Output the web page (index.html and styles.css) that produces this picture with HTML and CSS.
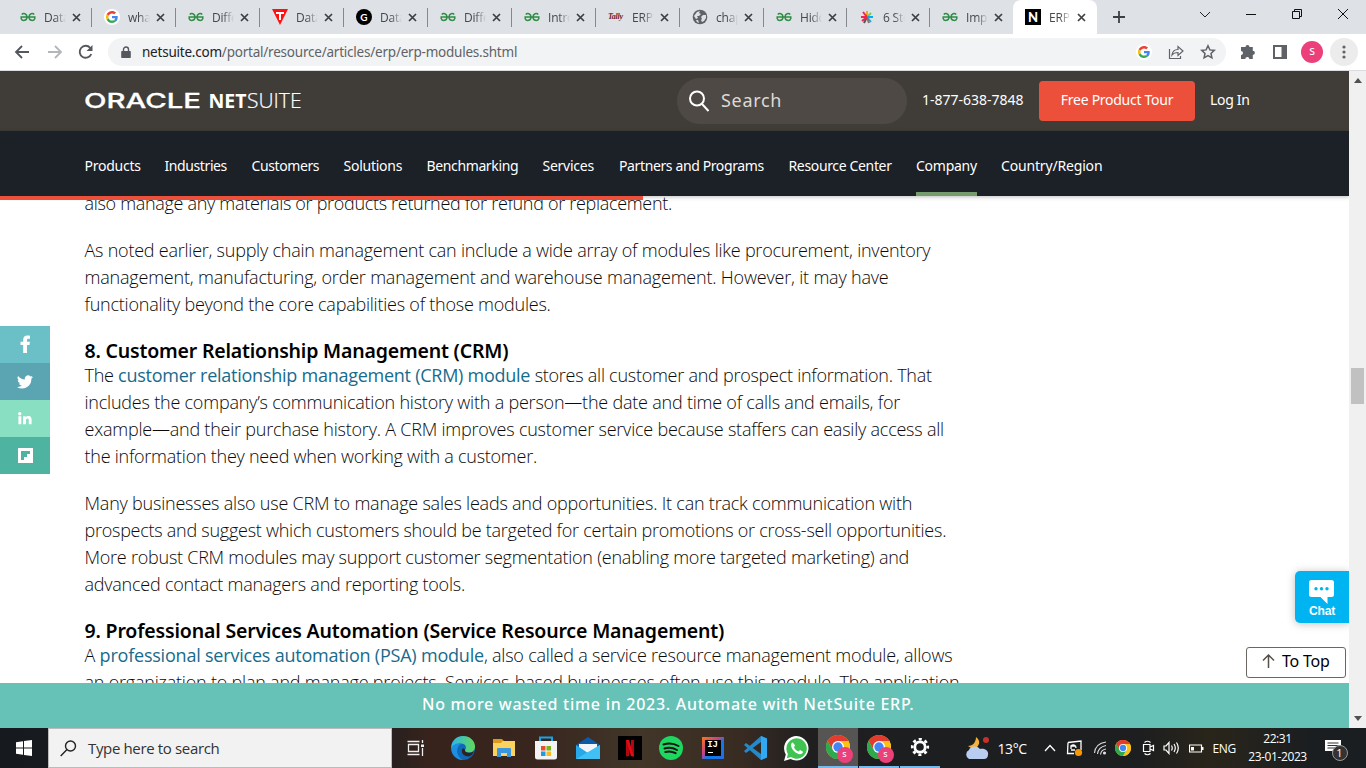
FILE: index.html
```html
<!DOCTYPE html>
<html lang="en">
<head>
<meta charset="utf-8">
<title>ERP Modules</title>
<link rel="stylesheet" href="styles.css">
</head>
<body>
<svg class="defs" width="0" height="0">
  <symbol id="gfg" viewBox="0 0 16 16"><path d="M1.800 5.500C3.200 3.800 7 4.500 7 8c0 4-4.800 4.500-5.800 1.400V8h13.600v1.400C13.800 12.500 9 12 9 8c0-3.500 3.800-4.200 5.200-2.500" fill="none" stroke="#2f8d46" stroke-width="1.500"/></symbol>
  <symbol id="goog" viewBox="0 0 48 48"><path fill="#ea4335" d="M24 9.500c3.540 0 6.710 1.220 9.210 3.600l6.850-6.850C35.900 2.380 30.470 0 24 0 14.620 0 6.510 5.380 2.560 13.220l7.980 6.190C12.430 13.720 17.740 9.500 24 9.500z"/><path fill="#4285f4" d="M46.980 24.550c0-1.570-.15-3.090-.38-4.550H24v9.020h12.940c-.58 2.960-2.260 5.480-4.780 7.180l7.730 6c4.510-4.180 7.090-10.360 7.090-17.650z"/><path fill="#fbbc05" d="M10.530 28.590a14.500 14.500 0 0 1 0-9.180l-7.980-6.190a24 24 0 0 0 0 21.560z"/><path fill="#34a853" d="M24 48c6.480 0 11.930-2.130 15.890-5.810l-7.730-6c-2.150 1.450-4.920 2.300-8.160 2.300-6.260 0-11.570-4.220-13.470-9.910l-7.980 6.190C6.510 42.620 14.620 48 24 48z"/></symbol>
  <symbol id="x" viewBox="0 0 9 9"><path d="M1 1l7 7M8 1L1 8" stroke="#3c4043" stroke-width="1.700"/></symbol>
  <symbol id="chrome" viewBox="0 0 24 24"><circle cx="12" cy="12" r="12" fill="#fbc116"/><path d="M1.600 6A12 12 0 0 1 22.400 6H12L6.800 15z" fill="#e33b2e"/><path d="M1.600 6A12 12 0 0 0 12 24l5.200-9L12 12l-5.200 3z" fill="#2da94f"/><path d="M12 24A12 12 0 0 0 22.400 6H12l5.200 9z" fill="#fbc116"/><circle cx="12" cy="12" r="6" fill="#fff"/><circle cx="12" cy="12" r="4.700" fill="#4285f4"/></symbol>
</svg>

<div class="tabs">
  <div class="tab"><svg class="fav"><use href="#gfg"/></svg><span>Data</span><svg class="cl"><use href="#x"/></svg></div>
  <div class="tab"><i class="fav disc"><svg width="12" height="12"><use href="#goog"/></svg></i><span>what</span><svg class="cl"><use href="#x"/></svg></div>
  <div class="tab"><svg class="fav"><use href="#gfg"/></svg><span>Diffe</span><svg class="cl"><use href="#x"/></svg></div>
  <div class="tab"><svg class="fav" viewBox="0 0 16 16"><path d="M0 0h16L8 16z" fill="#f11"/><path d="M4 3h8v2H9v6H7V5H4z" fill="#fff"/></svg><span>Data</span><svg class="cl"><use href="#x"/></svg></div>
  <div class="tab"><i class="fav gdark">G</i><span>Data</span><svg class="cl"><use href="#x"/></svg></div>
  <div class="tab"><svg class="fav"><use href="#gfg"/></svg><span>Diffe</span><svg class="cl"><use href="#x"/></svg></div>
  <div class="tab"><svg class="fav"><use href="#gfg"/></svg><span>Intro</span><svg class="cl"><use href="#x"/></svg></div>
  <div class="tab"><i class="fav tally">Tally</i><span>ERP</span><svg class="cl"><use href="#x"/></svg></div>
  <div class="tab"><svg class="fav" viewBox="0 0 16 16"><circle cx="8" cy="8" r="7.300" fill="#5f6368"/><path d="M2 7l3-4 3-1-1 2 2 1-2 2H5l1 2-2 1zM9 8l2-2 3 0 0 3-2 3-2 1-1-2 1-1zM4 11l2 0 1 3-2-1z" fill="#dee1e6"/></svg><span>chap</span><svg class="cl"><use href="#x"/></svg></div>
  <div class="tab narrow"><svg class="fav"><use href="#gfg"/></svg><span>Hidd</span><svg class="cl"><use href="#x"/></svg></div>
  <div class="tab narrow"><svg class="fav" viewBox="0 0 16 16" fill="none" stroke-width="2"><path d="M8 8V2" stroke="#f5a623"/><path d="M8 8l4-4M9 8" stroke="#8cc63f"/><path d="M9 8h5" stroke="#00aeef"/><path d="M8 8l4 5" stroke="#29a9e0"/><path d="M8 8l-3 6" stroke="#555"/><path d="M8 8l2 6" stroke="#777"/><path d="M8 8H2M8 8L3 12M8 8L4 3" stroke="#f0264a"/></svg><span>6 Ste</span><svg class="cl"><use href="#x"/></svg></div>
  <div class="tab narrow nosep"><svg class="fav"><use href="#gfg"/></svg><span>Imp</span><svg class="cl"><use href="#x"/></svg></div>
  <div class="tab active"><i class="fav nfav">N</i><span>ERP</span><svg class="cl"><use href="#x"/></svg></div>
  <svg class="plus" width="12" height="12"><path d="M6 0v12M0 6h12" stroke="#3c4043" stroke-width="1.800"/></svg>
  <div class="wins">
    <svg width="12" height="12"><path d="M1 4l5 5 5-5" fill="none" stroke="#222"/></svg>
    <svg width="12" height="12"><path d="M1 6.500h10" stroke="#111"/></svg>
    <svg width="12" height="12"><path d="M1.500 3.500h7v7h-7zM3.500 3.500v-2h7v7h-2" fill="none" stroke="#111"/></svg>
    <svg width="12" height="12"><path d="M1 1l10 10M11 1L1 11" stroke="#111"/></svg>
  </div>
</div>

<div class="toolbar">
  <svg class="back" width="16" height="16" fill="none" stroke="#54585d" stroke-width="1.800"><path d="M15 8H2M8 2L2 8l6 6"/></svg>
  <svg class="fwd" width="16" height="16" fill="none" stroke="#b4b7ba" stroke-width="1.800"><path d="M1 8h13M8 2l6 6-6 6"/></svg>
  <svg class="reload" width="16" height="16"><path d="M13.300 10A6 6 0 1 1 12.200 3.800" fill="none" stroke="#54585d" stroke-width="1.900"/><path d="M14.500 1v6h-6z" fill="#54585d"/></svg>
  <div class="omni">
    <svg width="10" height="13"><path d="M1 5h8q.8 0 .8.800v5.400q0 .8-.8.800H1q-.8 0-.8-.8V5.800Q.2 5 1 5z" fill="#54585d"/><path d="M2.500 5V3.500a2.500 2.500 0 0 1 5 0V5" fill="none" stroke="#54585d" stroke-width="1.400"/></svg>
    <p class="url"><b>netsuite.com</b>/portal/resource/articles/erp/erp-modules.shtml</p>
    <i class="disc gd"><svg width="12" height="12"><use href="#goog"/></svg></i>
    <svg class="share" width="16" height="16" fill="none" stroke="#5f6368" stroke-width="1.200"><path d="M1.500 5v9.500h11V12M4 11c.5-4 3-5.500 6-5.500V2.500L15 7l-5 4.500v-3C7 8.500 5.500 9 4 11z"/></svg>
    <svg class="star" width="16" height="16" fill="none" stroke="#5f6368" stroke-width="1.500"><path d="M8 1.800l1.900 4.100 4.400.5-3.300 3 .9 4.400L8 11.600l-3.900 2.200.9-4.400-3.300-3 4.400-.5z"/></svg>
  </div>
  <svg class="puz" width="16" height="16" fill="#5f6368"><path d="M5.500 3a2 2 0 0 1 4 0h3.300v3.700a2.100 2.100 0 0 1 0 4.200V15H9.300a2 2 0 0 0-4 0H1v-4a2 2 0 0 0 0-4V3z"/></svg>
  <svg class="side" width="14" height="14"><path d="M1 1h12v12H1z" fill="none" stroke="#5f6368" stroke-width="2"/><path d="M8.500 0H14v14H8.500z" fill="#5f6368"/></svg>
  <i class="avatar">s</i>
  <div class="more"><svg width="4" height="14" fill="#5f6368"><circle cx="2" cy="2" r="1.600"/><circle cx="2" cy="7" r="1.600"/><circle cx="2" cy="12" r="1.600"/></svg></div>
</div>

<div class="view">
  <div class="page">
    <header class="top">
      <svg class="logo" width="217" height="20" fill="#fff"><text x="-1" y="17" class="l1" textLength="117" lengthAdjust="spacingAndGlyphs">ORACLE</text><text x="123.500" y="17" class="l2" textLength="38" lengthAdjust="spacingAndGlyphs">NET</text><text x="162" y="17" class="l3" textLength="54.500" lengthAdjust="spacingAndGlyphs">SUITE</text></svg>
      <div class="search"><svg width="20" height="22" fill="none" stroke="#fff" stroke-width="2"><circle cx="8" cy="8.500" r="7"/><path d="M13 14l6.500 7"/></svg><span>Search</span></div>
      <span class="phone">1-877-638-7848</span>
      <a class="tour">Free Product Tour</a>
      <span class="login">Log In</span>
    </header>
    <nav class="nav"><a class="n1">Products</a><a class="n2">Industries</a><a class="n3">Customers</a><a class="n4">Solutions</a><a class="n5">Benchmarking</a><a class="n6">Services</a><a class="n7">Partners and Programs</a><a class="n8">Resource Center</a><a class="n9 on">Company</a><a class="n10">Country/Region</a></nav>
    <div class="progress"></div>
    <article class="art">
      <p><span class="a0">also manage any materials or products returned for refund or replacement.</span></p>
      <p><span class="a1">As noted earlier, supply chain management can include a wide array of modules like procurement, inventory</span><span class="a2">management, manufacturing, order management and warehouse management. However, it may have</span><span class="a3">functionality beyond the core capabilities of those modules.</span></p>
      <h3 class="h8">8. Customer Relationship Management (CRM)</h3>
      <p><span class="a4">The <a>customer relationship management (CRM) module</a> stores all customer and prospect information. That</span><span class="a5">includes the company’s communication history with a person—the date and time of calls and emails, for</span><span class="a6">example—and their purchase history. A CRM improves customer service because staffers can easily access all</span><span class="a7">the information they need when working with a customer.</span></p>
      <p><span class="a8">Many businesses also use CRM to manage sales leads and opportunities. It can track communication with</span><span class="a9">prospects and suggest which customers should be targeted for certain promotions or cross-sell opportunities.</span><span class="a10">More robust CRM modules may support customer segmentation (enabling more targeted marketing) and</span><span class="a11">advanced contact managers and reporting tools.</span></p>
      <h3 class="h9">9. Professional Services Automation (Service Resource Management)</h3>
      <p><span class="a12">A <a>professional services automation (PSA) module</a>, also called a service resource management module, allows</span><span class="a13">an organization to plan and manage projects. Services-based businesses often use this module. The application</span></p>
    </article>
    <div class="social">
      <i class="fb"><svg width="12" height="19"><path d="M4.200 18V10H1.500V6.800h2.700V4.700C4.200 2 5.800.6 8.200.6c1.200 0 2.800.2 2.800.2v3H9.600c-1.300 0-1.600.7-1.600 1.500v1.500h2.900L10.500 10H8v8z" fill="#fff"/></svg></i>
      <i class="tw"><svg width="16" height="14" viewBox="0 0 24 20"><path d="M24 2.400a10 10 0 0 1-2.800.8A5 5 0 0 0 23.300.500a10 10 0 0 1-3.100 1.200 4.900 4.900 0 0 0-8.400 4.500A14 14 0 0 1 1.700 1a4.900 4.900 0 0 0 1.500 6.600A5 5 0 0 1 1 7v.1a4.900 4.900 0 0 0 3.900 4.800 5 5 0 0 1-2.200.1 4.900 4.900 0 0 0 4.600 3.400A9.900 9.900 0 0 1 0 17.500 14 14 0 0 0 21.500 5a10 10 0 0 0 2.500-2.600z" fill="#fff"/></svg></i>
      <i class="li"><svg width="14" height="14" fill="#fff"><circle cx="1.800" cy="1.800" r="1.700"/><path d="M.4 4.300h2.900v8H.4zM5 4.300h2.700v1.200C8.200 4.600 9.200 4.100 10.300 4.100c2.800 0 3.300 1.800 3.300 4.100v4.100h-2.800V8.600c0-.9 0-2-1.300-2s-1.600 1-1.600 2v3.700H5z"/></svg></i>
      <i class="fl"><svg width="15" height="15"><path d="M0 0h15v15H0z" fill="#fff"/><path d="M3 3h9v3H9v3H6v3H3z" fill="#4fb3a2"/></svg></i>
    </div>
    <div class="chat"><svg width="26" height="24"><path d="M2.500 0h20Q25 0 25 2.500v12q0 2.500-2.500 2.500H18.500v7L11.500 17h-9Q0 17 0 14.500v-12Q0 0 2.500 0z" fill="#fff"/><g fill="#00b4f1"><circle cx="7" cy="8.700" r="1.700"/><circle cx="12.500" cy="8.700" r="1.700"/><circle cx="18" cy="8.700" r="1.700"/></g></svg><span>Chat</span></div>
    <div class="totop"><svg width="13" height="15" fill="none" stroke="#555049" stroke-width="1.500"><path d="M6.500 14V1M1 6.500L6.500 1 12 6.500"/></svg><span>To Top</span></div>
    <div class="banner"><span>No more wasted time in 2023. Automate with NetSuite ERP.</span></div>
  </div>
  <div class="scroll"><svg width="8" height="5"><path d="M4 0l4 5H0z" fill="#505050"/></svg><i></i><svg class="dn" width="8" height="5"><path d="M4 5L8 0H0z" fill="#505050"/></svg></div>
</div>

<div class="task">
  <div class="start"><svg width="16" height="16" fill="#fff"><path d="M0 2.200l7-.9v6.200H0zM8 1.100L16 0v7.500H8zM0 8.500h7v6.200l-7-.9zM8 8.500h8V16l-8-1.100z"/></svg></div>
  <div class="tsearch"><svg width="17" height="17" fill="none" stroke="#222" stroke-width="1.400"><circle cx="10.500" cy="6" r="5"/><path d="M7 9.500L.700 16"/></svg><span>Type here to search</span></div>
  <div class="apps">
    <i class="view-btn"><svg width="18" height="16" fill="none" stroke="#eee" stroke-width="1.300"><path d="M1.500 4.500h10v7h-10zM.500 1.500h12M.500 14.500h12M15.500 0v3M15.500 8v8"/><path d="M14 4.500h3v2.500h-3z" fill="#eee" stroke="none"/></svg></i>
    <i><svg width="24" height="24"><defs><linearGradient id="ed" x1="0" x2="1"><stop offset="0" stop-color="#2fb5e8"/><stop offset="1" stop-color="#63d957"/></linearGradient></defs><circle cx="12" cy="12" r="12" fill="#1268b8"/><path d="M.3 10C1.500 4 6 0 12 0c7 0 12 5 12 10.500 0 4-3 6-6 6-2.500 0-4.500-1-4-2.500 2-2 1-6.500-4-6.500C6 7.500 2 9 .3 13z" fill="url(#ed)"/><path d="M10 8c-5 2-6 12 2 15.900C5 24 0 18 .3 12 2 8 7 6.500 10 8z" fill="#1b8fe0"/><path d="M14 14c-.5 2 2 3 4.500 2.700 2 0 3.500-.7 4.500-1.700-1 3-3 5-5 5.500-5 0-8-3-7-7 .6-1.600 2.500-1.500 3 .5z" fill="#2b2320"/></svg></i>
    <i><svg width="22" height="20"><path d="M0 1h9l2 2H0z" fill="#d08b12"/><path d="M0 3h22v15H0z" fill="#fbd25d"/><path d="M0 1.500Q0 1 1 1h7l1.500 2L8 5H0z" fill="#dc9a1c"/><path d="M4 19v-8q0-1 1-1h12q1 0 1 1v8h-4v-4H8v4z" fill="#3a96dd"/></svg></i>
    <i><svg width="24" height="24"><path d="M6 6V1.500h12V6" fill="none" stroke="#19a4e8" stroke-width="2"/><path d="M1 5h22v16q0 2.500-2.500 2.500h-17Q1 23.500 1 21z" fill="#f3f3f3"/><path d="M7 10h4.500v4.500H7z" fill="#e8502b"/><path d="M12.500 10H17v4.500h-4.500z" fill="#79b41c"/><path d="M7 15.500h4.500V20H7z" fill="#1b9de2"/><path d="M12.500 15.500H17V20h-4.500z" fill="#f9b81b"/></svg></i>
    <i><svg width="24" height="23"><path d="M0 8l12-8 12 8v3H0z" fill="#0d5ba8"/><path d="M3 7h18v9H3z" fill="#f2f6f9"/><path d="M0 8l12 8 12-8v14H0z" fill="#27a8e8"/><path d="M0 22L24 8v14z" fill="#41c0f5"/></svg></i>
    <i><svg width="24" height="24"><path d="M0 0h24v24H0z" fill="#000"/><path d="M8 4h3v16l-3 .4zM13 4h3v16.400l-3-.4z" fill="#b20710"/><path d="M8 4h3l5 16.400-3-.4z" fill="#e50914"/></svg></i>
    <i><svg width="24" height="24"><circle cx="12" cy="12" r="12" fill="#1ed760"/><path d="M4.500 8.500C9 7 15 7.500 19.500 10M5.500 12.500c4-1.300 8.500-.8 12.500 1.500M6.300 16c3.500-1 7-.6 10.300 1.200" stroke="#141414" stroke-width="2" fill="none" stroke-linecap="round"/></svg></i>
    <i class="ij"><b>IJ</b></i>
    <i><svg width="24" height="24"><path d="M18 0l6 2.500v19L18 24 1 9l2-2 15 11V6L3 17l-2-2z" fill="#2489ca"/><path d="M18 0l6 2.500v19L18 24z" fill="#31a8f2"/></svg></i>
    <i><svg width="25" height="25"><path d="M0 25l1.800-6.500A12.200 12.200 0 1 1 6.500 23z" fill="#fff"/><path d="M2.800 22.200l1.100-4.300A10.200 10.200 0 1 1 7 21.100z" fill="#3fc351"/><path d="M8.800 6.500c-1 .2-2 1.500-1.800 3 .5 4 5 8.500 9 8.800 1.500 0 3-1 3-2.500l-3-1.900-1.500 1.600c-2-.5-4-2.500-4.500-4.400l1.200-1.500z" fill="#fff"/></svg></i>
    <i class="run cur"><svg width="24" height="24"><use href="#chrome"/></svg><em>s</em></i>
    <i class="run"><svg width="24" height="24"><use href="#chrome"/></svg><em>s</em></i>
    <i class="run set"><svg width="20" height="20"><circle cx="10" cy="10" r="7.800" fill="none" stroke="#fff" stroke-width="2.600" stroke-dasharray="3.060 3.060" stroke-dashoffset="1.500"/><circle cx="10" cy="10" r="5.200" fill="none" stroke="#fff" stroke-width="2.800"/></svg></i>
  </div>
  <div class="tray">
    <svg class="wx" width="26" height="24"><path d="M12 1c5 4 4 8-2 13l-6-4c5 0 8-4 8-9z" fill="#f6b13c"/><circle cx="22" cy="4" r="3" fill="#c9302c"/><path d="M5 23a5 5 0 0 1 0-9c1-4 8-5 11-1 5-1 9 2 8 6-.3 3-2 4-4 4z" fill="#b8cdf0"/></svg>
    <span class="deg">13°C</span>
    <svg class="up" width="12" height="8"><path d="M1 7l5-5.500L11 7" fill="none" stroke="#fff" stroke-width="1.300"/></svg>
    <svg class="t1" width="17" height="17"><path d="M2 2.500l13-1.500v9M2 2.500l-.5 11H8M5 9V6h4M5 6c2-2 5-1 5 2M5 10h4" fill="none" stroke="#fff" stroke-width="1.300"/><circle cx="12.500" cy="12.500" r="3.600" fill="#f7980a"/></svg>
    <svg class="t2" width="14" height="14" fill="none" stroke="#ddd" stroke-width="1.100"><path d="M1.500 12C2 6 6 2 13 1M4.500 13C5 8.500 8 5.500 13 4.500M7.500 13.500C8 10.500 9.500 8.500 13 8"/><circle cx="11.500" cy="12" r="1" fill="#fff"/></svg>
    <svg class="t3" width="16" height="16"><use href="#chrome"/></svg>
    <svg class="t4" width="13" height="16" fill="none" stroke="#fff" stroke-width="1.200"><path d="M2.500 2.500q3-2.500 6 0M2.500 13.500q3 2.500 6 0M1.500 4.500h6.500v7H1.500zM8 7l3.500-1.500v5L8 9"/></svg>
    <svg class="t5" width="17" height="14" fill="none" stroke="#fff" stroke-width="1.200"><path d="M1 5v4h2l3 3.500v-11L3 5zM8.500 4.500q1.500 2.500 0 5M11 3q2.600 4 0 8M13.500 1.500q3.600 5.500 0 11"/></svg>
    <svg class="t6" width="15" height="9"><path d="M.500 1h12v7H.500z" fill="none" stroke="#fff" stroke-width="1.200"/><path d="M2 3h3v3.500H2zM13 3h1.500v3H13z" fill="#fff"/></svg>
    <span class="eng">ENG</span>
    <div class="clock"><span class="tm">22:31</span><span class="dt">23-01-2023</span></div>
    <div class="note"><svg width="17" height="18"><path d="M0 1h16v11h-5v4l-4-4H0z" fill="#fff"/><path d="M2.500 4h11M2.500 6.500h11M2.500 9h8" stroke="#333"/></svg><em>1</em></div>
  </div>
</div>
</body>
</html>
```

FILE: styles.css
```css
* { box-sizing: border-box; }
body { margin: 0; width: 1366px; height: 768px; overflow: hidden; display: flex; flex-direction: column; font-family: "Noto Sans", "Open Sans", sans-serif; background: #fff; }
p, h3 { margin: 0; }
i, em { font-style: normal; }
svg { display: block; flex: none; }
.defs { position: absolute; }

.tabs { height: 34px; flex: none; background: #dee1e6; display: flex; padding-left: 8px; }
.tab { width: 84px; flex: none; height: 34px; display: flex; align-items: center; padding-left: 12px; font: 12px "Open Sans", sans-serif; color: #45484c; background: linear-gradient(#85888d, #85888d) right 0 top 8px / 1px 19px no-repeat; }
.tab.narrow { width: 83px; }
.tab.nosep { background: none; }
.tab.active { background: #fff; border-radius: 8px 8px 0 0; }
.fav { width: 16px; height: 16px; flex: none; margin-right: 8px; }
.tab span { width: 22px; overflow: hidden; white-space: nowrap; letter-spacing: -.2px; -webkit-mask-image: linear-gradient(90deg, #000 50%, transparent); mask-image: linear-gradient(90deg, #000 50%, transparent); }
.cl { width: 9px; height: 9px; margin-left: 6px; }
.disc { width: 16px; height: 16px; border-radius: 50%; background: #fff; display: flex; align-items: center; justify-content: center; }
.gdark { border-radius: 50%; background: #000; color: #fff; font: bold 10px/16px Lato, sans-serif; text-align: center; }
.nfav { background: #000; color: #fff; font: 900 13px/16px Lato, sans-serif; text-align: center; }
.tally { font: italic bold 8px/16px "Liberation Serif", serif; color: #6b2530; letter-spacing: -.3px; }
.plus { margin: 11px 0 0 16px; }
.wins { display: flex; gap: 34px; margin: 8px 0 0 74px; }

.toolbar { height: 37px; flex: none; display: flex; align-items: center; border-bottom: 1px solid #dadce0; padding: 0 8px 0 14px; }
.fwd { margin-left: 17px; }
.reload { margin-left: 15px; }
.omni { width: 1118px; height: 28px; border-radius: 14px; background: #f1f3f4; margin-left: 14px; display: flex; align-items: center; padding-left: 13px; }
.url { font-size: 13.500px; color: #5f6368; margin-left: 11px; width: 994px; letter-spacing: -.22px; }
.url b { font-weight: 400; color: #202124; }
.gd { flex: none; }
.share { margin-left: 16px; }
.star { margin-left: 16px; }
.puz { margin-left: 14px; }
.side { margin-left: 17px; }
.avatar { width: 22px; height: 22px; border-radius: 50%; background: #ec407a; color: #fff; font-size: 12px; line-height: 20px; text-align: center; margin-left: 14px; }
.more { width: 28px; height: 28px; border-radius: 50%; background: #ececec; display: flex; align-items: center; justify-content: center; margin-left: 7px; }

.view { height: 657px; flex: none; display: flex; }
.page { width: 1349px; height: 657px; position: relative; overflow: hidden; }
.top { height: 60px; background: #403c38; display: flex; align-items: center; padding-left: 85px; color: #fff; font-size: 14px; position: relative; z-index: 2; }
.logo { margin-right: 375px; }
.l1 { font: 500 20px Inter, sans-serif; stroke: #fff; stroke-width: .3px; }
.l2 { font: 700 20px "Open Sans", sans-serif; }
.l3 { font: 300 20px "Open Sans", sans-serif; stroke: #fff; stroke-width: .2px; }
.search { width: 230px; height: 46px; border-radius: 23px; background: #4e4944; display: flex; align-items: center; padding-left: 12px; font-size: 18px; letter-spacing: .7px; color: #dcdad6; }
.search span { margin: -2px 0 0 12px; }
.phone { width: 102px; margin-left: 15px; white-space: nowrap; padding-bottom: 3px; letter-spacing: 0; }
.tour { width: 156px; height: 40px; border-radius: 4px; background: #ec503a; margin-left: 15px; line-height: 38px; text-align: center; letter-spacing: -.27px; }
.login { margin-left: 15px; letter-spacing: -.3px; padding-bottom: 3px; }
.nav { height: 65px; background: #1c2027; display: flex; padding-left: 84.500px; color: #fff; font-size: 14px; line-height: 69px; white-space: nowrap; position: relative; z-index: 2; box-shadow: 0 1px 4px rgba(0,0,0,.25); letter-spacing: -.25px; }
.n1 { width: 80px; } .n2 { width: 87px; letter-spacing: -.4px; } .n3 { width: 92px; letter-spacing: -.4px; } .n4 { width: 83px; } .n5 { width: 116px; letter-spacing: -.37px; }
.n6 { width: 76.500px; } .n7 { width: 169.500px; letter-spacing: -.38px; } .n8 { width: 127.500px; letter-spacing: -.35px; } .n9 { width: 61px; margin-right: 24px; } .n10 { width: 102px; letter-spacing: -.17px; }
.on { border-bottom: 4px solid #759c6c; height: 65px; }
.progress { height: 4px; width: 643px; background: #ec503a; position: relative; z-index: 2; }
.art { margin: -10px 0 0 84.500px; width: 900px; font: 300 18px/27px "Open Sans", sans-serif; color: #0c0a08; }
.art p { margin-bottom: 20px; }
.art span { display: block; white-space: nowrap; }
.art a { color: #176b8c; font-weight: 400; }
.art h3 { font: 600 19.500px/25px "Noto Sans", sans-serif; color: #000; white-space: nowrap; margin-bottom: -1px; letter-spacing: -.19px; }
.art h3.h9 { letter-spacing: -.165px; }
.a0 { letter-spacing: -.31px; }
.a1 { letter-spacing: -.235px; }
.a2 { letter-spacing: -.195px; }
.a3 { letter-spacing: -.23px; }
.a4 { letter-spacing: -.255px; }
.a5 { letter-spacing: -.215px; }
.a6 { letter-spacing: -.222px; }
.a7 { letter-spacing: -.25px; }
.a8 { letter-spacing: -.215px; }
.a9 { letter-spacing: -.256px; }
.a10 { letter-spacing: -.243px; }
.a11 { letter-spacing: -.235px; }
.a12, .a13 { letter-spacing: -.21px; }

.social { position: absolute; left: 0; top: 255px; width: 50px; }
.social i { height: 37px; display: flex; align-items: center; justify-content: center; }
.fb { background: #6bbfc6; } .tw { background: #5aa5b1; } .li { background: #88dfc1; } .fl { background: #4fb3a2; }
.chat { position: absolute; right: 0; top: 500px; width: 54px; height: 52px; border-radius: 5px 0 0 5px; background: #00b4f1; box-shadow: 0 1px 8px rgba(0,0,0,.25); display: flex; flex-direction: column; align-items: center; padding-top: 9px; color: #fff; font: bold 12px/14px "Liberation Sans", sans-serif; letter-spacing: -.2px; }
.totop { position: absolute; left: 1246px; top: 576px; width: 100px; height: 31px; border: 1px solid #6b665f; border-radius: 3px; background: #fff; display: flex; align-items: center; padding-left: 15px; gap: 7px; font-size: 16px; line-height: 24px; color: #000; }
.totop svg { margin-top: -3px; }
.totop span { margin-top: -4px; letter-spacing: -.2px; white-space: nowrap; }
.banner { position: absolute; left: 0; bottom: 0; width: 1349px; height: 45px; background: #66c1b7; color: #fff; font: 500 16px/43px "Noto Sans", sans-serif; padding-left: 422px; letter-spacing: .72px; white-space: nowrap; }
.scroll { width: 17px; background: #f0f0f0; display: flex; flex-direction: column; align-items: center; padding: 7px 0; }
.scroll i { width: 13px; height: 36px; background: #c1c1c1; margin-top: 285px; }
.dn { margin-top: auto; }

.task { height: 40px; flex: none; display: flex; color: #fff; background: linear-gradient(90deg, #161a1f 0, #1d1f20 370px, #38231c 430px, #37251e 530px, #413628 640px, #382b22 740px, #201f20 810px, #1c1e20 920px, #1d1e1f 1140px, #29251a 1210px, #1b1e20 1310px); }
.start { width: 48px; display: flex; align-items: center; justify-content: center; }
.tsearch { width: 344px; border: 1px solid #bbb; background: #f2f2f2; color: #333; display: flex; align-items: center; padding-left: 11px; gap: 11px; font: 15px "Open Sans", sans-serif; letter-spacing: -.35px; }
.apps { display: flex; padding-left: 3px; }
.apps i { width: 41.750px; height: 40px; display: flex; align-items: center; justify-content: center; position: relative; }
.apps i.view-btn { margin-right: 5px; }
.apps i.cur { background: #575553; }
.apps i.run { border-bottom: 2px solid #76b9ed; width: 40px; margin-right: 1px; }
.run em { position: absolute; right: 5px; bottom: 3px; width: 16px; height: 16px; border-radius: 50%; background: #ec407a; color: #fff; font-size: 9px; line-height: 14px; text-align: center; }
.ij::before { content: ""; position: absolute; width: 22px; height: 22px; background: linear-gradient(135deg, #f97a12, #c83f8d 40%, #0a7bea 60%, #2b6be4); }
.ij b { position: relative; width: 16px; height: 16px; background: linear-gradient(#fff, #fff) 3px 12px / 5px 1px no-repeat #000; color: #fff; font: bold 9px/10px "Liberation Mono", monospace; padding-left: 2px; }
.tray { display: flex; align-items: center; flex: 1; font: 14px "Open Sans", sans-serif; padding-left: 23px; }
.deg { margin-left: 8px; width: 30px; white-space: nowrap; letter-spacing: -.4px; }
.up { margin-left: 16px; }
.t1 { margin-left: 10px; } .t2 { margin-left: 10px; } .t3 { margin-left: 8px; } .t4 { margin-left: 11px; } .t5 { margin-left: 8px; } .t6 { margin-left: 9px; }
.eng { font-size: 12px; width: 24px; margin-left: 9px; letter-spacing: -.3px; }
.clock { width: 60px; margin-left: 11px; font-size: 12px; line-height: 18px; display: flex; flex-direction: column; align-items: center; white-space: nowrap; letter-spacing: -.4px; }
.note { position: relative; margin-left: 17px; }
.note em { position: absolute; left: 7px; top: 6px; width: 16px; height: 16px; border-radius: 50%; background: #333; border: 1px solid #999; font-size: 11px; line-height: 13px; text-align: center; }
```
